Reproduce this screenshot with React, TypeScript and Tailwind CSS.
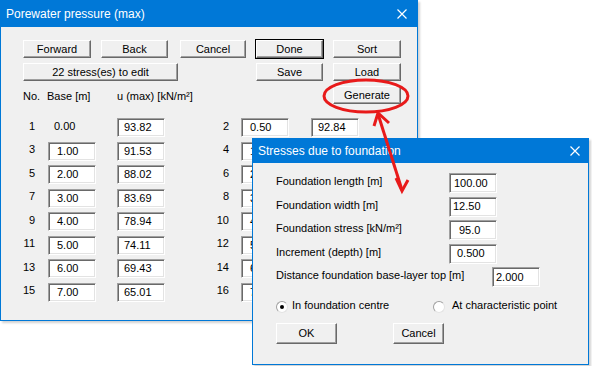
import React from "react";

const font = { fontFamily: '"Liberation Sans", Arial, sans-serif' };

const Btn = ({ label, w, def = false, className = "" }: { label: string; w: string; def?: boolean; className?: string }) => (
  <div
    className={`${w} h-[18px] flex items-center justify-center bg-[#f0f0f0] text-[11px] text-black border border-t-white border-l-white border-b-[#696969] border-r-[#696969] shadow-[inset_-1px_-1px_0_#a0a0a0] ${def ? "outline outline-1 outline-black" : ""} ${className}`}
  >
    {label}
  </div>
);

const Field = ({ value, pad = "pl-[6px]", className = "" }: { value: string; pad?: string; className?: string }) => (
  <div
    className={`w-[48px] h-[19px] flex items-center bg-white text-[11px] text-black border border-t-[#a0a0a0] border-l-[#a0a0a0] border-b-white border-r-white shadow-[inset_1px_1px_0_#696969,inset_-1px_-1px_0_#e3e3e3] ${pad} ${className}`}
  >
    {value}
  </div>
);

const Close = () => (
  <svg width="10" height="10" viewBox="0 0 10 10" className="shrink-0">
    <path d="M0.5 0.5 L9.5 9.5 M9.5 0.5 L0.5 9.5" stroke="white" strokeWidth="1.2" />
  </svg>
);

const rows = [
  ["1", "0.00", "93.82", "2", "0.50", "92.84"],
  ["3", "1.00", "91.53", "4", "1.50", "89.90"],
  ["5", "2.00", "88.02", "6", "2.50", "85.95"],
  ["7", "3.00", "83.69", "8", "3.50", "81.35"],
  ["9", "4.00", "78.94", "10", "4.50", "76.55"],
  ["11", "5.00", "74.11", "12", "5.50", "71.70"],
  ["13", "6.00", "69.43", "14", "6.50", "67.17"],
  ["15", "7.00", "65.01", "16", "7.50", "62.90"],
];

const dialogRows = [
  ["Foundation length [m]", "100.00", "pl-[4px]"],
  ["Foundation width [m]", "12.50", "pl-[3px]"],
  ["Foundation stress [kN/m²]", "95.0", "pl-[9px]"],
  ["Increment (depth) [m]", "0.500", "pl-[7px]"],
];

export default function App() {
  return (
    <div className="relative w-[592px] h-[366px] bg-white overflow-hidden text-black" style={font}>
      {/* Main window */}
      <div className="absolute left-0 top-0 w-[418px] h-[321px] border border-[#0078d7] bg-[#f0f0f0] shadow-[2px_2px_2px_rgba(0,0,0,0.18)]">
        <div className="h-[26px] bg-[#0078d7] flex items-center justify-between pl-[5px] pr-[10px] text-white text-[12px]">
          <span>Porewater pressure (max)</span>
          <Close />
        </div>
        <div className="pl-[22px] pt-[13px]">
          <div className="flex">
            <Btn label="Forward" w="w-[68px]" />
            <Btn label="Back" w="w-[67px]" className="ml-[10px]" />
            <Btn label="Cancel" w="w-[66px]" className="ml-[12px]" />
            <Btn label="Done" w="w-[67px]" className="ml-[10px]" def />
            <Btn label="Sort" w="w-[68px]" className="ml-[10px]" />
          </div>
          <div className="flex mt-[5px]">
            <Btn label="22 stress(es) to edit" w="w-[155px]" />
            <Btn label="Save" w="w-[67px]" className="ml-[78px]" />
            <Btn label="Load" w="w-[68px]" className="ml-[10px]" />
          </div>
          <div className="flex mt-[5px] h-[18px] items-center text-[11px]">
            <span className="w-[24px] pt-[3px]">No.</span>
            <span className="w-[70px] pt-[3px]">Base [m]</span>
            <span className="w-[216px] pt-[3px]">u (max) [kN/m²]</span>
            <Btn label="Generate" w="w-[68px]" />
          </div>
          <div className="mt-[14px] flex flex-col gap-[4.5px]">
            {rows.map((r, i) => (
              <div key={i} className="flex items-center h-[19px] text-[11px]">
                <span className="w-[12px] text-right -mt-[3px]">{r[0]}</span>
                <div className="ml-[13px]">
                  {i === 0 ? (
                    <div className="w-[48px] pl-[6px] -mt-[2px]">{r[1]}</div>
                  ) : (
                    <Field value={r[1]} pad="pl-[8px]" />
                  )}
                </div>
                <Field value={r[2]} className="ml-[21px]" />
                <span className="w-[64px] text-right -mt-[3px]">{r[3]}</span>
                <Field value={r[4]} pad="pl-[8px]" className="ml-[12px]" />
                <Field value={r[5]} className="ml-[22px]" />
              </div>
            ))}
          </div>
        </div>
      </div>

      {/* Stresses dialog */}
      <div className="absolute left-[252px] top-[138px] w-[337px] h-[227px] border border-[#0078d7] bg-[#f0f0f0] shadow-[2px_2px_2px_rgba(0,0,0,0.18)]">
        <div className="h-[24px] bg-[#0078d7] flex items-center justify-between pl-[5px] pr-[8px] text-white text-[12px]">
          <span>Stresses due to foundation</span>
          <Close />
        </div>
        <div className="pl-[23px] pt-[10px] text-[11px]">
          <div className="flex flex-col gap-[3.5px]">
            {dialogRows.map(([l, v, p]) => (
              <div key={l} className="flex items-center h-[20px]">
                <span className="w-[173px] -mt-[3px]">{l}</span>
                <Field value={v} pad={p} className="h-[20px]" />
              </div>
            ))}
            <div className="flex items-center h-[20px]">
              <span className="w-[216px] -mt-[3px]">Distance foundation base-layer top [m]</span>
              <Field value="2.000" pad="pl-[3px]" className="h-[20px]" />
            </div>
          </div>
          <div className="flex items-center mt-[13px] h-[13px]">
            <div className="w-[12px] h-[12px] rounded-full bg-white border border-[#a0a0a0] border-b-[#e3e3e3] border-r-[#e3e3e3] flex items-center justify-center">
              <div className="w-[4px] h-[4px] rounded-full bg-black" />
            </div>
            <span className="ml-[4px] w-[141px] -mt-[2px]">In foundation centre</span>
            <div className="w-[12px] h-[12px] rounded-full bg-white border border-[#a0a0a0] border-b-[#e3e3e3] border-r-[#e3e3e3]" />
            <span className="ml-[7px] -mt-[2px]">At characteristic point</span>
          </div>
          <div className="flex mt-[10px]">
            <Btn label="OK" w="w-[61px] h-[21px]" />
            <Btn label="Cancel" w="w-[51px] h-[21px]" className="ml-[56px]" />
          </div>
        </div>
      </div>

      {/* Red annotation */}
      <svg className="absolute left-0 top-0 pointer-events-none" width="592" height="366">
        <ellipse cx="366" cy="96" rx="42" ry="16" fill="none" stroke="#e81a1a" strokeWidth="3" />
        <line x1="378" y1="114" x2="402" y2="190" stroke="#e81a1a" strokeWidth="3" />
        <polyline points="374,126 378,113 389,123" fill="none" stroke="#e81a1a" strokeWidth="3" />
        <polyline points="396,178 402,191 408,180" fill="none" stroke="#e81a1a" strokeWidth="3" />
      </svg>
    </div>
  );
}
